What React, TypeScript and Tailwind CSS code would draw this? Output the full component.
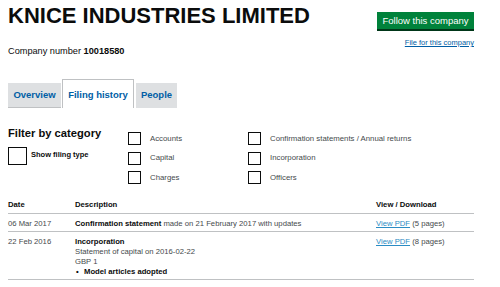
import React from 'react';

const categoriesLeft = ['Accounts', 'Capital', 'Charges'];
const categoriesRight = ['Confirmation statements / Annual returns', 'Incorporation', 'Officers'];

const CategoryBox = ({ label }: { label: string }) => (
  <label className="flex items-center h-[13px]">
    <span className="w-[13px] h-[13px] border-[1.5px] border-[#0b0c0c] bg-white shrink-0"></span>
    <span className="ml-[9px] text-[7.8px] leading-[10px] text-[#454a4c] whitespace-nowrap">{label}</span>
  </label>
);

export default function App() {
  return (
    <div className="w-[500px] h-[287px] bg-white overflow-hidden font-['Liberation_Sans',Arial,sans-serif] text-[#0b0c0c]">
      <div className="ml-2 w-[466px]">
        {/* Header */}
        <div className="flex justify-between items-start">
          <div>
            <h1 className="pt-[5px] text-[22px] leading-[22px] font-bold whitespace-nowrap">KNICE INDUSTRIES LIMITED</h1>
            <p className="mt-[18px] text-[9.2px] leading-[12px]">
              Company number <strong className="font-bold">10018580</strong>
            </p>
          </div>
          <div className="flex flex-col items-end pt-[12px]">
            <button className="w-[97px] h-[19px] bg-[#00823b] border-b-2 border-[#003618] text-white text-[9.5px] leading-[17px] text-center">
              Follow this company
            </button>
            <a href="#" className="mt-[7px] text-[7.5px] leading-[9px] text-[#005ea5] underline">File for this company</a>
          </div>
        </div>

        {/* Tabs */}
        <div className="mt-[22px] flex items-end">
          <div className="w-[53px] h-[25px] bg-[#dee0e2] border-b border-[#bfc1c3] flex items-center justify-center text-[9.5px] font-bold text-[#005ea5]">
            Overview
          </div>
          <div className="ml-px w-[72px] h-[29px] bg-white border-t border-l border-r border-[#bfc1c3] flex items-center justify-center pt-[2px] text-[9.5px] font-bold text-[#005ea5]">
            Filing history
          </div>
          <div className="ml-[2px] w-[41px] h-[25px] bg-[#dee0e2] flex items-center justify-center text-[9.5px] font-bold text-[#005ea5]">
            People
          </div>
        </div>

        {/* Filter */}
        <div className="mt-[19px] flex">
          <div className="w-[120px]">
            <h2 className="text-[11.2px] leading-[13px] font-bold whitespace-nowrap">Filter by category</h2>
            <label className="mt-[7px] flex items-center">
              <span className="w-[19px] h-[18px] border-[1.5px] border-[#0b0c0c] bg-white shrink-0"></span>
              <span className="ml-[4px] -mt-[2px] text-[7.5px] font-bold whitespace-nowrap">Show filing type</span>
            </label>
          </div>
          <div className="mt-[5px] flex">
            <div className="w-[120px] flex flex-col gap-y-[6.5px]">
              {categoriesLeft.map((c) => (
                <CategoryBox key={c} label={c} />
              ))}
            </div>
            <div className="flex flex-col gap-y-[6.5px]">
              {categoriesRight.map((c) => (
                <CategoryBox key={c} label={c} />
              ))}
            </div>
          </div>
        </div>

        {/* Filing table */}
        <div className="mt-[16px] text-[7.7px]">
          <div className="flex h-[14px] border-b border-[#bfc1c3] font-bold leading-[10px]">
            <div className="w-[67px]">Date</div>
            <div className="w-[301px]">Description</div>
            <div>View / Download</div>
          </div>
          <div className="flex pt-[5px] pb-[2px] leading-[10px] border-b border-[#bfc1c3] text-[#454a4c]">
            <div className="w-[67px]">06 Mar 2017</div>
            <div className="w-[301px]">
              <span className="font-bold text-[#0b0c0c]">Confirmation statement</span> made on 21 February 2017 with updates
            </div>
            <div>
              <a href="#" className="text-[#2b8cc4] underline">View PDF</a> (5 pages)
            </div>
          </div>
          <div className="flex pt-[5px] pb-[2px] leading-[10px] border-b border-[#bfc1c3] text-[#454a4c]">
            <div className="w-[67px]">22 Feb 2016</div>
            <div className="w-[301px]">
              <div className="font-bold text-[#0b0c0c]">Incorporation</div>
              <div>Statement of capital on 2016-02-22</div>
              <div>GBP 1</div>
              <div className="flex font-bold text-[#0b0c0c]">
                <span className="w-[9px] pl-px">•</span>
                <span>Model articles adopted</span>
              </div>
            </div>
            <div>
              <a href="#" className="text-[#2b8cc4] underline">View PDF</a> (8 pages)
            </div>
          </div>
        </div>
      </div>
    </div>
  );
}
